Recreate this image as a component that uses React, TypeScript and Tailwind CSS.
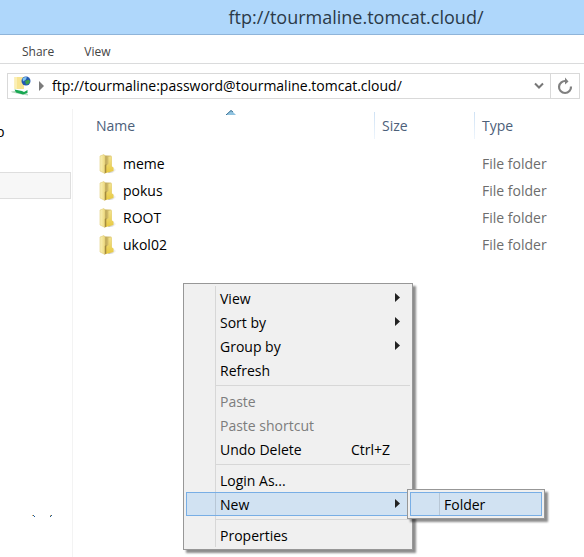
import React from "react";

const font = "font-['Open_Sans','Noto_Sans',sans-serif]";

function FolderIcon() {
  return (
    <svg width="20" height="22" viewBox="0 0 20 22" aria-hidden="true" className="shrink-0">
      <defs>
        <linearGradient id="flap" x1="0" x2="1">
          <stop offset="0" stopColor="#fbf2b8" />
          <stop offset="1" stopColor="#ecd87c" />
        </linearGradient>
        <linearGradient id="back" x1="0" x2="1">
          <stop offset="0" stopColor="#a58f4a" />
          <stop offset="0.45" stopColor="#cdb765" />
          <stop offset="1" stopColor="#e9d68a" />
        </linearGradient>
        <linearGradient id="front" x1="0" y1="0" x2="0" y2="1">
          <stop offset="0" stopColor="#f1e18e" />
          <stop offset="1" stopColor="#e8c93f" />
        </linearGradient>
        <linearGradient id="shade" x1="0" x2="1">
          <stop offset="0" stopColor="#888" stopOpacity="0.7" />
          <stop offset="1" stopColor="#ccc" stopOpacity="0.1" />
        </linearGradient>
      </defs>
      <path d="M10 20L14 14L18.5 17L15 19.5Z" fill="url(#shade)" />
      <path d="M5.5 2.5L13 2.5L14 3.5V14L8 19Z" fill="url(#back)" />
      <path d="M2 3L6 1.5L7 3V20.5L2 18Z" fill="url(#flap)" stroke="#e0cc78" strokeWidth="0.6" />
      <path d="M7.5 13L10.5 11V4L13.5 3.5V13L15.5 14.5V18L8 20Z" fill="url(#front)" />
      <path d="M6.8 12L8.3 11V19.5L6.8 20.5Z" fill="#a48b3d" />
    </svg>
  );
}

function NetworkFolderIcon() {
  return (
    <svg width="22" height="22" viewBox="0 0 22 22" aria-hidden="true" className="shrink-0">
      <path d="M3.5 2H13V14H3.5Z" fill="#f8e593" />
      <path d="M3.5 2H6V14H3.5Z" fill="#fbefb4" />
      <circle cx="15" cy="6" r="4.5" fill="#2458b3" />
      <path d="M11.5 3.5Q14 1 16 2.5L14.5 5L12 6.5Z" fill="#7fc4ee" />
      <path d="M14 6L18 4.5L19 7Q17 10 15 9.5Z" fill="#3fa34c" />
      <path d="M0 16.5L7 15.5V17.5L12 18L17 19V20.5L11 19.5L1 17.5Z" fill="#b9d8c2" />
      <path d="M3.5 14.5L11 16L13 17L16.5 15V18L12 19.5L5 17.5Z" fill="#18a852" />
    </svg>
  );
}

function Arrow() {
  return (
    <svg width="5" height="9" viewBox="0 0 5 9" aria-hidden="true">
      <path d="M0 0L5 4.5L0 9Z" fill="#222" />
    </svg>
  );
}

function MenuItem({ label, shortcut, arrow, disabled, active }: {
  label: string; shortcut?: string; arrow?: boolean; disabled?: boolean; active?: boolean;
}) {
  return (
    <button
      type="button"
      role="menuitem"
      disabled={disabled}
      aria-haspopup={arrow ? "menu" : undefined}
      className={`flex h-6 w-full items-center pl-[29px] text-left leading-[26px] ${
        active ? "bg-[#d1e2f2] outline outline-1 -outline-offset-1 outline-[#78aee5]" : ""
      } ${disabled ? "text-[#7d7d7d]" : "text-black"}`}
    >
      <span className={`h-6 flex-1 border-l pl-1 ${active ? "border-[#b8c7d6]" : "border-[#d7d7d7]"}`}>{label}</span>
      {shortcut && <span className="h-6 pr-5">{shortcut}</span>}
      {arrow && <span className="flex pr-[10px] pb-0.5"><Arrow /></span>}
    </button>
  );
}

function Separator() {
  return (
    <div role="separator" className="ml-[29px] flex h-[7px] items-center border-l border-[#d7d7d7]">
      <div className="h-px w-full bg-[#d7d7d7]" />
    </div>
  );
}

const menuBox = "border border-[#979797] bg-[#f0f0f0] p-0.5 shadow-[3px_3px_2px_rgba(0,0,0,0.45)]";

function ContextMenu() {
  return (
    <div role="menu" className={`absolute top-[174px] left-[110px] w-[230px] text-sm ${menuBox}`}>
      <MenuItem label="View" arrow />
      <MenuItem label="Sort by" arrow />
      <MenuItem label="Group by" arrow />
      <MenuItem label="Refresh" />
      <Separator />
      <MenuItem label="Paste" disabled />
      <MenuItem label="Paste shortcut" disabled />
      <MenuItem label="Undo Delete" shortcut="Ctrl+Z" />
      <Separator />
      <MenuItem label="Login As..." />
      <MenuItem label="New" arrow active />
      <Separator />
      <MenuItem label="Properties" />
      <div role="menu" className={`absolute top-[205px] left-[223px] w-[138px] ${menuBox}`}>
        <MenuItem label="Folder" active />
      </div>
    </div>
  );
}

const files = ["meme", "pokus", "ROOT", "ukol02"];
const headCell = "h-[35px] p-0 pb-0.5 text-left align-middle font-normal";

function RuledHeading({ children }: { children: string }) {
  return (
    <div className="flex h-[27px] items-center gap-[7px]">
      <span className="h-full w-px bg-linear-to-b from-[#cfe2f5] to-[#eef5fc]" />
      {children}
    </div>
  );
}

export default function App() {
  return (
    <div className={`flex h-screen flex-col overflow-hidden bg-white text-black ${font}`}>
      <header className="flex h-[35px] shrink-0 items-center justify-center border-b border-[#8fb4d9] bg-[#afd7fb] pl-32">
        <h1 className="text-lg text-[#2b3a48]">ftp://tourmaline.tomcat.cloud/</h1>
      </header>
      <nav className="flex h-[29px] shrink-0 items-center gap-[30px] border-b border-[#dadbdc] pt-1.5 pl-[22px] text-xs text-[#444]">
        <button type="button">Share</button>
        <button type="button">View</button>
      </nav>
      <div className="mt-[9px] mr-[4px] ml-[7px] flex h-[26px] shrink-0 items-center border border-[#d9d9d9] text-sm">
        <span className="pl-[3px]"><NetworkFolderIcon /></span>
        <svg width="5" height="10" viewBox="0 0 5 10" className="ml-[6px] shrink-0" aria-hidden="true">
          <path d="M0 0L5 5L0 10Z" fill="#7b7b7b" />
        </svg>
        <input
          aria-label="Address"
          defaultValue="ftp://tourmaline:password@tourmaline.tomcat.cloud/"
          className="ml-2 min-w-0 flex-1 bg-transparent outline-none"
        />
        <button type="button" aria-label="Previous locations" className="flex h-full w-[22px] items-center justify-center">
          <svg width="10" height="8" viewBox="0 0 10 8" fill="none" stroke="#777" strokeWidth="2">
            <path d="M1 1.5L5 5.5L9 1.5" />
          </svg>
        </button>
        <button type="button" aria-label="Refresh" className="flex h-full w-[29px] items-center justify-center border-l border-[#d9d9d9]">
          <svg width="16" height="18" viewBox="0 0 16 18" fill="none" stroke="#808080" strokeWidth="2.2">
            <path d="M9 4.1A6 6 0 1 0 14 9.5" />
            <path d="M8 0.5L11.5 4.5L8 7.5Z" fill="#808080" stroke="none" />
          </svg>
        </button>
      </div>
      <main className="mt-[10px] flex min-h-0 flex-1">
        <aside className="flex w-[73px] shrink-0 flex-col overflow-hidden border-r border-[#f3f3f3] text-sm">
          <div className="flex h-[46px] items-center overflow-hidden"><span className="-ml-1">p</span></div>
          <div className="mt-[17px] mr-px h-[27px] border border-l-0 border-[#dedede] bg-[#f7f7f7]" />
          <svg width="20" height="3" viewBox="0 0 20 3" className="mt-[316px] ml-8 shrink-0" aria-hidden="true">
            <path d="M0 0.5H2M18 0.5H19" stroke="#e9b45c" />
            <path d="M1 0.5H2M2 1.5H3M19 0.5H20M18 1.5H19" stroke="#1d5c9c" />
          </svg>
        </aside>
        <section className="relative min-w-0 flex-1 text-sm">
          <svg width="10" height="5" viewBox="0 0 10 5" className="absolute top-[1px] left-[153px]" aria-hidden="true">
            <path d="M0 5L5 0L10 5Z" fill="#8fc3e0" />
            <path d="M0 5L5 0.5L7 2" fill="none" stroke="#3c6f90" />
          </svg>
          <table className="w-full table-fixed border-collapse">
            <colgroup>
              <col className="w-[301px]" />
              <col className="w-[100px]" />
              <col />
            </colgroup>
            <thead className="text-[#4c607a]">
              <tr>
                <th className={`${headCell} pl-[23px]`}>Name</th>
                <th className={headCell}><RuledHeading>Size</RuledHeading></th>
                <th className={headCell}><RuledHeading>Type</RuledHeading></th>
              </tr>
            </thead>
            <tbody>
              <tr className="h-[6px]"><td /></tr>
              {files.map((name) => (
                <tr key={name} className="h-[27px]">
                  <td className="p-0">
                    <div className="flex items-center gap-[5px] pl-[25px]"><FolderIcon />{name}</div>
                  </td>
                  <td />
                  <td className="p-0 pl-2 text-[#6d6d6d]">File folder</td>
                </tr>
              ))}
            </tbody>
          </table>
          <ContextMenu />
        </section>
      </main>
    </div>
  );
}
